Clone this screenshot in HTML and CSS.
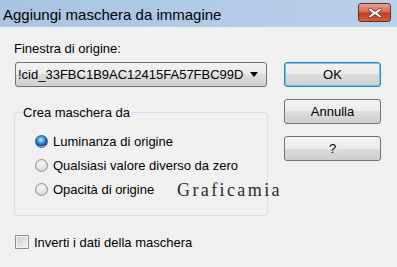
FILE: index.html
```html
<!DOCTYPE html>
<html>
<head>
    <title>Aggiungi maschera da immagine</title>
    <meta name="viewport" content="width=device-width, initial-scale=1.0">
    <link rel="stylesheet" href="styles.css">
</head>
<body>
    <div class="window">
        <div class="titlebar">
            <span class="title">Aggiungi maschera da immagine</span>
            <div class="close-btn">
                <svg width="16" height="12" viewBox="0 0 16 12">
                    <path d="M3 1 L8 4.5 L13 1 L15 2.5 L10.5 6 L15 9.5 L13 11 L8 7.5 L3 11 L1 9.5 L5.5 6 L1 2.5 Z" fill="#fff" stroke="#5a2a22" stroke-width="0.8"/>
                </svg>
            </div>
        </div>

        <div class="dialog">
            <div class="left-col">
                <div class="label">Finestra di origine:</div>
                <div class="combo">
                    <span class="combo-text">!cid_33FBC1B9AC12415FA57FBC99D</span>
                    <span class="combo-arrow"></span>
                </div>

                <fieldset class="group">
                    <legend>Crea maschera da</legend>
                    <div class="radio-row">
                        <span class="radio checked"></span>
                        <span>Luminanza di origine</span>
                    </div>
                    <div class="radio-row">
                        <span class="radio"></span>
                        <span>Qualsiasi valore diverso da zero</span>
                    </div>
                    <div class="radio-row">
                        <span class="radio"></span>
                        <span>Opacità di origine</span>
                    </div>
                </fieldset>

                <div class="check-row">
                    <span class="checkbox"></span>
                    <span>Inverti i dati della maschera</span>
                </div>
            </div>

            <div class="right-col">
                <div class="button default">OK</div>
                <div class="button">Annulla</div>
                <div class="button">?</div>
            </div>
        </div>

        <!-- watermark over the dialog -->
        <div class="watermark">Graficamia</div>
    </div>
</body>
</html>
```

FILE: styles.css
```css
body {
    margin: 0;
    background-color: #f0f0f0;
    font-family: 'Liberation Sans', Arial, sans-serif;
    font-size: 13px;
    color: #000;
}

.window {
    position: relative;
    width: 397px;
    height: 267px;
    overflow: hidden;
}

.titlebar {
    height: 27px;
    display: flex;
    align-items: center;
    justify-content: space-between;
    background: linear-gradient(to right, #a9c4e2, #b9d1ea);
    padding-left: 3px;
    padding-right: 6px;
    box-sizing: border-box;
}

.title {
    font-size: 15px;
    color: #000;
    margin-top: 1px;
}

.close-btn {
    width: 33px;
    height: 19px;
    margin-top: -2px;
    box-sizing: border-box;
    border: 1px solid #6b2b22;
    border-radius: 3px;
    background: linear-gradient(#eba493, #d86a52 45%, #c33a22 55%, #d2603f);
    display: flex;
    align-items: center;
    justify-content: center;
}

.dialog {
    display: flex;
    padding: 0 16px 0 14px;
    gap: 16px;
}

.left-col {
    width: 254px;
}

.label {
    margin-top: 14px;
    line-height: 16px;
}

.combo {
    margin: 5px 1px 0 1px;
    height: 25px;
    box-sizing: border-box;
    border: 1px solid #707070;
    border-radius: 3px;
    background: linear-gradient(#f2f2f2, #ebebeb 50%, #dddddd 50%, #cfcfcf);
    display: flex;
    align-items: center;
    justify-content: space-between;
    padding: 0 8px 0 2px;
}

.combo-arrow {
    width: 0;
    height: 0;
    border-left: 4px solid transparent;
    border-right: 4px solid transparent;
    border-top: 5px solid #000;
}

.group {
    margin: 18px 0 0 0;
    padding: 9px 0 14px 20px;
    border: 1px solid #d5dfe5;
    border-radius: 3px;
    width: 254px;
    box-sizing: border-box;
}

.group legend {
    padding: 0 2px;
    margin-left: -14px;
    line-height: 15px;
}

.radio-row,
.check-row {
    display: flex;
    align-items: center;
    height: 24px;
}

.radio {
    width: 13px;
    height: 13px;
    box-sizing: border-box;
    border-radius: 50%;
    border: 1px solid #8f8f8f;
    background: radial-gradient(circle at 50% 35%, #f7f7f7, #dcdcdc 70%, #c4c4c4);
    margin-right: 5px;
}

.radio.checked {
    border-color: #3c5e82;
    background: radial-gradient(circle at 45% 35%, #c4ecff, #2f8fd8 40%, #0b3f80 70%, #d8d8d8 72%, #f2f2f2);
}

.check-row {
    margin-top: 18px;
    height: 16px;
    margin-left: 1px;
}

.checkbox {
    width: 14px;
    height: 14px;
    box-sizing: border-box;
    border: 1px solid #8f8f8f;
    background: linear-gradient(135deg, #cbcfd5, #f2f2f2);
    box-shadow: inset 0 0 0 1px #f4f4f4;
    margin-right: 5px;
}

.right-col {
    width: 97px;
    padding-top: 35px;
}

.button {
    height: 25px;
    box-sizing: border-box;
    border: 1px solid #707070;
    border-radius: 3px;
    background: linear-gradient(#f2f2f2, #ebebeb 50%, #dddddd 50%, #cfcfcf);
    display: flex;
    align-items: center;
    justify-content: center;
    margin-bottom: 12px;
}

.button.default {
    border-color: #3c7fb1;
    box-shadow: inset 0 0 0 1px #5fcdf6;
}

.watermark {
    position: absolute;
    left: 177px;
    top: 180px;
    font-family: 'Liberation Serif', 'Times New Roman', serif;
    font-size: 18px;
    letter-spacing: 2.4px;
    color: #2a2a2a;
}
```
